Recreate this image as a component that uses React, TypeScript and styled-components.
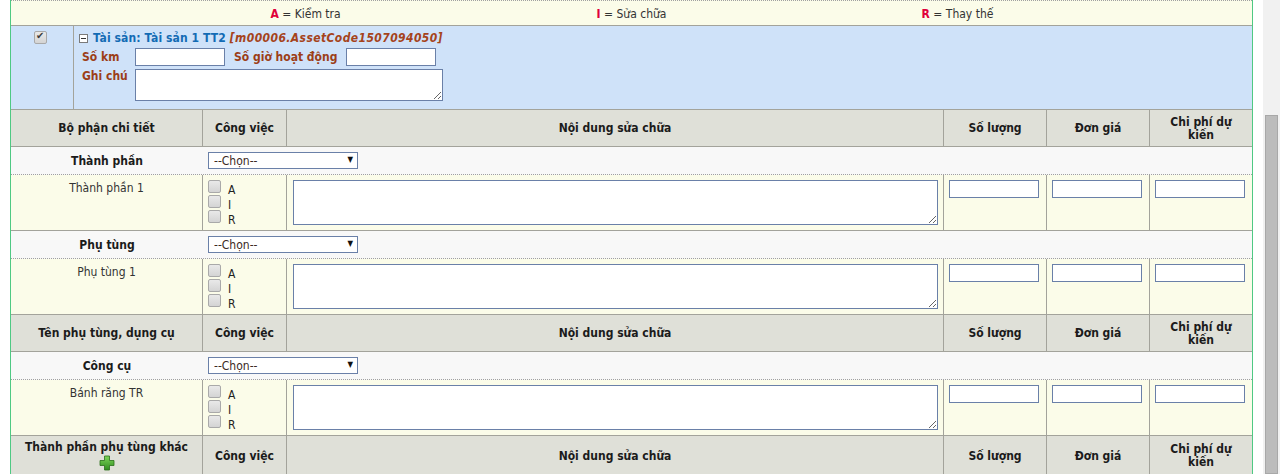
import React from "react";
import styled, { createGlobalStyle, css } from "styled-components";

const GlobalStyle = createGlobalStyle`
  html, body { margin: 0; padding: 0; background: #ffffff; overflow: hidden; }
  body { font-family: "DejaVu Sans Condensed", "DejaVu Sans", sans-serif; font-size: 12px; color: #333; }
  * { box-sizing: border-box; }
`;

const FONT = `"DejaVu Sans Condensed", "DejaVu Sans", sans-serif`;
const GRID = "192px 84px 657px 103px 103px 102px";
const LINE = "#a3a39b";

const Page = styled.div`
  display: flex;
  align-items: stretch;
  padding-left: 10px;
  gap: 10px;
  height: 474px;
`;

const Sheet = styled.div`
  width: 1243px;
  border-left: 1px solid #4fc983;
  border-right: 1px solid #4fc983;
  font-family: ${FONT};
`;

const ScrollTrack = styled.div`
  width: 17px;
  background: #f1f1f1;
  padding: 115px 2px 0 2px;
  display: flex;
`;

const ScrollThumb = styled.div`
  flex: 1;
  background: #bcbcbc;
  border: 1px solid #a8a8a8;
`;

const Legend = styled.div`
  height: 26px;
  border-top: 1px dotted #a0a0a0;
  border-bottom: 1px solid ${LINE};
  background: #fbfce9;
  display: grid;
  grid-template-columns: repeat(3, 326px);
  justify-content: center;
  align-items: center;
  padding-top: 2px;
`;

const LegendItem = styled.div`
  text-align: center;
  color: #333;
  font-size: 12px;
`;

const Key = styled.b`
  color: #e0003a;
`;

const AssetRow = styled.div`
  height: 84px;
  background: #cfe2f9;
  border-bottom: 1px solid ${LINE};
  display: grid;
  grid-template-columns: 63px 1fr;
`;

const AssetCheckCell = styled.div`
  border-right: 1px solid ${LINE};
  display: flex;
  justify-content: center;
  padding: 5px 4px 0 0;
`;

const AssetBody = styled.div`
  padding: 5px 0 0 5px;
  display: flex;
  flex-direction: column;
  gap: 3px;
`;

const AssetTitle = styled.div`
  display: flex;
  align-items: center;
  gap: 5px;
  font-weight: bold;
  font-size: 12px;
  height: 14px;
  letter-spacing: 0.1px;
`;

const Collapse = styled.span`
  width: 9px;
  height: 9px;
  border: 1px solid #7a7a7a;
  background: #fff;
  display: inline-flex;
  align-items: center;
  justify-content: center;
  &::after {
    content: "";
    width: 5px;
    height: 1px;
    background: #333;
  }
`;

const AssetName = styled.span`
  color: #136bb4;
`;

const AssetCode = styled.i`
  color: #a5431b;
  letter-spacing: 0.4px;
`;

const FieldRow = styled.div<{ $top?: boolean }>`
  display: flex;
  align-items: ${(p) => (p.$top ? "flex-start" : "center")};
  padding-left: 3px;
`;

const FieldLabel = styled.label<{ $w?: number; $ml?: number }>`
  color: #9c3e17;
  font-weight: bold;
  font-size: 12px;
  width: ${(p) => (p.$w ? `${p.$w}px` : "auto")};
  margin-left: ${(p) => p.$ml ?? 0}px;
`;

const boxBorder = css`
  border: 1px solid #6a80a8;
  background: #fff;
  font-family: ${FONT};
  font-size: 12px;
  outline: none;
`;

const TextInput = styled.input<{ $w?: number; $ml?: number }>`
  ${boxBorder};
  width: ${(p) => p.$w ?? 90}px;
  height: 18px;
  margin-left: ${(p) => p.$ml ?? 0}px;
  padding: 0 2px;
`;

const TextArea = styled.textarea<{ $w: number; $h: number }>`
  ${boxBorder};
  width: ${(p) => p.$w}px;
  height: ${(p) => p.$h}px;
  resize: both;
  display: block;
  padding: 2px;
`;

const Check = styled.input.attrs({ type: "checkbox" })`
  appearance: none;
  -webkit-appearance: none;
  margin: 0;
  width: 13px;
  height: 13px;
  border: 1px solid #a9a9a9;
  border-radius: 2px;
  background: linear-gradient(#e9e9e9, #d4d4d4);
  position: relative;
  display: inline-block;
  &:checked::after {
    content: "✔";
    position: absolute;
    left: 1px;
    top: -2px;
    font-size: 10px;
    color: #3c3c3c;
  }
`;

const Row = styled.div<{ $kind: "head" | "cat" | "item"; $tall?: boolean }>`
  display: grid;
  grid-template-columns: ${GRID};
  ${(p) =>
    p.$kind === "head" &&
    css`
      height: ${p.$tall ? 40 : 37}px;
      background: #dfe0d8;
      border-bottom: 1px solid ${LINE};
    `}
  ${(p) =>
    p.$kind === "cat" &&
    css`
      height: 28px;
      background: #f8f8f8;
      border-bottom: 1px dotted #a0a0a0;
    `}
  ${(p) =>
    p.$kind === "item" &&
    css`
      height: 56px;
      background: #fbfce9;
      border-bottom: 1px solid ${LINE};
    `}
`;

const HeadCell = styled.div<{ $last?: boolean }>`
  border-right: ${(p) => (p.$last ? "none" : `1px solid ${LINE}`)};
  display: flex;
  flex-direction: column;
  align-items: center;
  justify-content: center;
  text-align: center;
  font-weight: bold;
  color: #1b1b1b;
  font-size: 12px;
  line-height: 13px;
  padding: 1px 12px 0;
`;

const CatName = styled.div`
  display: flex;
  align-items: center;
  justify-content: center;
  font-weight: bold;
  color: #1b1b1b;
  padding-top: 1px;
`;

const CatSelectCell = styled.div`
  grid-column: 2 / 7;
  display: flex;
  align-items: center;
  padding-left: 5px;
`;

const SelectWrap = styled.div`
  position: relative;
  width: 150px;
  height: 17px;
`;

const Select = styled.select`
  ${boxBorder};
  appearance: none;
  -webkit-appearance: none;
  width: 100%;
  height: 100%;
  padding: 0 0 0 5px;
  color: #3b2a24;
  border-radius: 0;
`;

const SelectArrow = styled.span`
  position: absolute;
  right: 5px;
  top: 3px;
  font-size: 8px;
  color: #111;
  pointer-events: none;
`;

const ItemCell = styled.div<{ $last?: boolean; $pad?: string }>`
  border-right: ${(p) => (p.$last ? "none" : `1px solid ${LINE}`)};
  padding: ${(p) => p.$pad ?? "5px"};
`;

const ItemName = styled(ItemCell)`
  text-align: center;
  color: #333;
  padding-top: 6px;
`;

const WorkList = styled.div`
  display: flex;
  flex-direction: column;
  gap: 2px;
`;

const WorkOption = styled.label`
  display: flex;
  align-items: flex-start;
  height: 13px;
  gap: 7px;
  color: #222;
  line-height: 13px;
  & > span {
    padding-top: 4px;
    line-height: 12px;
  }
`;

const PlusIcon = () => (
  <svg width="16" height="16" viewBox="0 0 16 16" style={{ marginTop: 1 }}>
    <defs>
      <linearGradient id="pg" x1="0" y1="0" x2="0" y2="1">
        <stop offset="0" stopColor="#7fd65a" />
        <stop offset="1" stopColor="#2f8c1e" />
      </linearGradient>
    </defs>
    <path
      d="M5.5 1h5v4.5H15v5h-4.5V15h-5v-4.5H1v-5h4.5z"
      fill="url(#pg)"
      stroke="#2a6f1a"
      strokeWidth="0.8"
    />
  </svg>
);

const headers = ["Công việc", "Nội dung sửa chữa", "Số lượng", "Đơn giá", "Chi phí dự kiến"];

const HeaderRow = ({ first, plus }: { first: string; plus?: boolean }) => (
  <Row $kind="head" $tall={plus}>
    <HeadCell>
      <span>{first}</span>
      {plus && <PlusIcon />}
    </HeadCell>
    {headers.map((h, i) => (
      <HeadCell key={h} $last={i === headers.length - 1}>
        {h === "Chi phí dự kiến" ? (
          <>
            Chi phí dự
            <br />
            kiến
          </>
        ) : (
          h
        )}
      </HeadCell>
    ))}
  </Row>
);

const CategoryRow = ({ name }: { name: string }) => (
  <Row $kind="cat">
    <CatName>{name}</CatName>
    <CatSelectCell>
      <SelectWrap>
        <Select defaultValue="">
          <option value="">--Chọn--</option>
        </Select>
        <SelectArrow>▼</SelectArrow>
      </SelectWrap>
    </CatSelectCell>
  </Row>
);

const ItemRow = ({ name }: { name: string }) => (
  <Row $kind="item">
    <ItemName>{name}</ItemName>
    <ItemCell>
      <WorkList>
        {["A", "I", "R"].map((k) => (
          <WorkOption key={k}>
            <Check />
            <span>{k}</span>
          </WorkOption>
        ))}
      </WorkList>
    </ItemCell>
    <ItemCell $pad="5px 6px">
      <TextArea $w={645} $h={45} />
    </ItemCell>
    <ItemCell>
      <TextInput />
    </ItemCell>
    <ItemCell>
      <TextInput />
    </ItemCell>
    <ItemCell $last>
      <TextInput />
    </ItemCell>
  </Row>
);

export default function App() {
  return (
    <>
      <GlobalStyle />
      <Page>
        <Sheet>
          <Legend>
            <LegendItem>
              <Key>A</Key> = Kiểm tra
            </LegendItem>
            <LegendItem>
              <Key>I</Key> = Sửa chữa
            </LegendItem>
            <LegendItem>
              <Key>R</Key> = Thay thế
            </LegendItem>
          </Legend>
          <AssetRow>
            <AssetCheckCell>
              <Check defaultChecked />
            </AssetCheckCell>
            <AssetBody>
              <AssetTitle>
                <Collapse />
                <span>
                  <AssetName>Tài sản: Tài sản 1 TT2</AssetName>{" "}
                  <AssetCode>[m00006.AssetCode1507094050]</AssetCode>
                </span>
              </AssetTitle>
              <FieldRow>
                <FieldLabel $w={53}>Số km</FieldLabel>
                <TextInput />
                <FieldLabel $ml={9}>Số giờ hoạt động</FieldLabel>
                <TextInput $ml={9} />
              </FieldRow>
              <FieldRow $top>
                <FieldLabel $w={53}>Ghi chú</FieldLabel>
                <TextArea $w={308} $h={32} />
              </FieldRow>
            </AssetBody>
          </AssetRow>
          <HeaderRow first="Bộ phận chi tiết" />
          <CategoryRow name="Thành phần" />
          <ItemRow name="Thành phần 1" />
          <CategoryRow name="Phụ tùng" />
          <ItemRow name="Phụ tùng 1" />
          <HeaderRow first="Tên phụ tùng, dụng cụ" />
          <CategoryRow name="Công cụ" />
          <ItemRow name="Bánh răng TR" />
          <HeaderRow first="Thành phần phụ tùng khác" plus />
        </Sheet>
        <ScrollTrack>
          <ScrollThumb />
        </ScrollTrack>
      </Page>
    </>
  );
}
